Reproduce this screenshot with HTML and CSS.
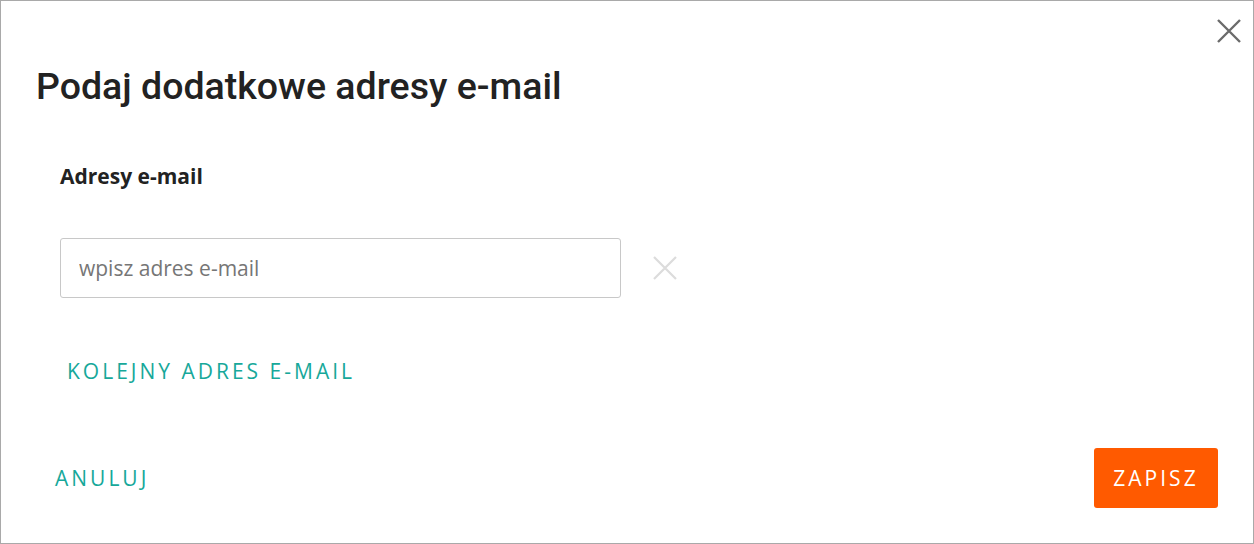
FILE: index.html
```html
<!DOCTYPE html>
<html lang="pl">
<head>
<meta charset="utf-8">
<link rel="stylesheet" href="styles.css">
</head>
<body>
<div class="dialog">
  <button class="close" aria-label="Zamknij">
    <svg width="24" height="24" viewBox="0 0 24 24"><path d="M1 1L23 23M23 1L1 23" stroke="#6b6b6b" stroke-width="2.4" fill="none"/></svg>
  </button>
  <h1 class="title">Podaj dodatkowe adresy e-mail</h1>
  <div class="field">
    <div class="label">Adresy e-mail</div>
    <div class="row">
      <input class="input" type="text" placeholder="wpisz adres e-mail">
      <span class="remove">
        <svg width="24" height="24" viewBox="0 0 24 24"><path d="M1 1L23 23M23 1L1 23" stroke="#dcdcdc" stroke-width="2.2" fill="none"/></svg>
      </span>
    </div>
    <div class="more">KOLEJNY ADRES E-MAIL</div>
  </div>
  <div class="actions">
    <span class="cancel">ANULUJ</span>
    <span class="save">ZAPISZ</span>
  </div>
</div>
</body>
</html>
```
FILE: styles.css
```css
html, body { margin: 0; padding: 0; background: #fff; }
.dialog {
  position: relative;
  box-sizing: border-box;
  width: 1254px;
  height: 544px;
  border: 1px solid #a9a9a9;
  padding: 0 35px 0 35px;
  display: flex;
  flex-direction: column;
}
.close {
  position: absolute;
  right: 12px;
  top: 18px;
  width: 24px; height: 24px;
  padding: 0; border: 0; background: none;
}
.close svg { display: block; }
.title {
  margin: 61px 0 0 0;
  font-family: Roboto, sans-serif;
  font-weight: 500;
  font-size: 37.5px;
  line-height: 48px;
  color: #222;
}
.field { padding-left: 24px; }
.label {
  margin-top: 52px;
  font-family: "Open Sans", sans-serif;
  font-weight: 700;
  font-size: 21px;
  line-height: 28px;
  color: #222;
}
.row {
  margin-top: 48px;
  display: flex;
  align-items: center;
  gap: 32px;
}
.input {
  box-sizing: border-box;
  width: 561px;
  height: 60px;
  border: 1px solid #c8c8c8;
  border-radius: 3px;
  padding: 0 18px;
  font-family: "Open Sans", sans-serif;
  font-size: 21px;
  color: #333;
  outline: none;
}
.input::placeholder { color: #767676; }
.remove svg { display: block; }
.more {
  margin-top: 59px;
  margin-left: 7px;
  font-family: "Open Sans", sans-serif;
  font-size: 21px;
  line-height: 28px;
  letter-spacing: 3px;
  color: #17a89a;
}
.actions {
  margin-top: auto;
  margin-bottom: 35px;
  display: flex;
  justify-content: space-between;
  align-items: center;
}
.cancel {
  margin-left: 19px;
  font-family: "Open Sans", sans-serif;
  font-size: 21px;
  letter-spacing: 3px;
  color: #17a89a;
}
.save {
  box-sizing: border-box;
  width: 124px;
  height: 60px;
  display: flex;
  align-items: center;
  justify-content: center;
  background: #ff5a00;
  border-radius: 3px;
  font-family: "Open Sans", sans-serif;
  font-size: 21px;
  letter-spacing: 3px;
  color: #fff;
}
```
